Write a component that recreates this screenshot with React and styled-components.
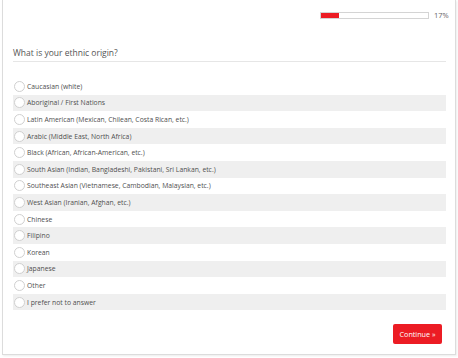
import React, { useState } from 'react';
import styled, { createGlobalStyle } from 'styled-components';

const GlobalStyle = createGlobalStyle`
  html, body { margin: 0; padding: 0; background: #fff; }
  body { font-family: "Open Sans", "Liberation Sans", sans-serif; color: #555; }
`;

const options = [
  'Caucasian (white)',
  'Aboriginal / First Nations',
  'Latin American (Mexican, Chilean, Costa Rican, etc.)',
  'Arabic (Middle East, North Africa)',
  'Black (African, African-American, etc.)',
  'South Asian (Indian, Bangladeshi, Pakistani, Sri Lankan, etc.)',
  'Southeast Asian (Vietnamese, Cambodian, Malaysian, etc.)',
  'West Asian (Iranian, Afghan, etc.)',
  'Chinese',
  'Filipino',
  'Korean',
  'Japanese',
  'Other',
  'I prefer not to answer',
];

const Page = styled.div`
  padding: 0 2px 2px 2px;
`;

const Panel = styled.div`
  height: 355px;
  box-sizing: border-box;
  border: 1px solid #dcdcdc;
  border-top: none;
  box-shadow: 1px 1px 2px rgba(0, 0, 0, 0.08);
  padding: 0 9px 0 10px;
  display: flex;
  flex-direction: column;
`;

const ProgressRow = styled.div`
  display: flex;
  justify-content: flex-end;
  align-items: center;
  gap: 5px;
  padding-top: 10px;
  height: 10px;
`;

const Track = styled.div`
  width: 107px;
  height: 5px;
  border: 1px solid #d4d4d4;
  background: #fff;
`;

const Fill = styled.div`
  height: 100%;
  background: #ec1c24;
`;

const Percent = styled.span`
  font-size: 7.5px;
  color: #666;
  width: 12px;
`;

const Title = styled.h1`
  margin: 27px 0 0 0;
  font-size: 8.5px;
  font-weight: 400;
  color: #555;
  padding-bottom: 3px;
  border-bottom: 1px solid #e6e6e6;
`;

const List = styled.div`
  margin-top: 16px;
  display: flex;
  flex-direction: column;
`;

const Row = styled.label`
  display: flex;
  align-items: center;
  height: 16.6px;
  padding-left: 1px;
  gap: 2px;
  background: ${(p) => (p.$shaded ? '#efefef' : 'transparent')};
  font-size: 6.8px;
  color: #4f4f4f;
  cursor: pointer;
`;

const Radio = styled.span`
  width: 9px;
  height: 9px;
  border-radius: 50%;
  border: 1px solid #d0d0d0;
  background: #fff;
  flex: none;
  box-sizing: content-box;
  display: flex;
  align-items: center;
  justify-content: center;
  &::after {
    content: '';
    width: 5px;
    height: 5px;
    border-radius: 50%;
    background: ${(p) => (p.$on ? '#ec1c24' : 'transparent')};
  }
`;

const Footer = styled.div`
  margin-top: auto;
  padding-bottom: 10px;
  display: flex;
  justify-content: flex-end;
  padding-right: 4px;
`;

const Button = styled.button`
  background: #ec1c24;
  color: #fff;
  border: none;
  border-radius: 2px;
  font-family: "Open Sans", "Liberation Sans", sans-serif;
  font-size: 7.2px;
  height: 20px;
  width: 49px;
  padding: 0;
  cursor: pointer;
`;

export default function App() {
  const [picked, setPicked] = useState(null);
  const progress = 17;
  return (
    <Page>
      <GlobalStyle />
      <Panel>
        <ProgressRow>
          <Track>
            <Fill style={{ width: `${progress}%` }} />
          </Track>
          <Percent>{progress}%</Percent>
        </ProgressRow>
        <Title>What is your ethnic origin?</Title>
        <List>
          {options.map((o, i) => (
            <Row key={o} $shaded={i % 2 === 1} onClick={() => setPicked(i)}>
              <Radio $on={picked === i} />
              {o}
            </Row>
          ))}
        </List>
        <Footer>
          <Button>Continue »</Button>
        </Footer>
      </Panel>
    </Page>
  );
}
